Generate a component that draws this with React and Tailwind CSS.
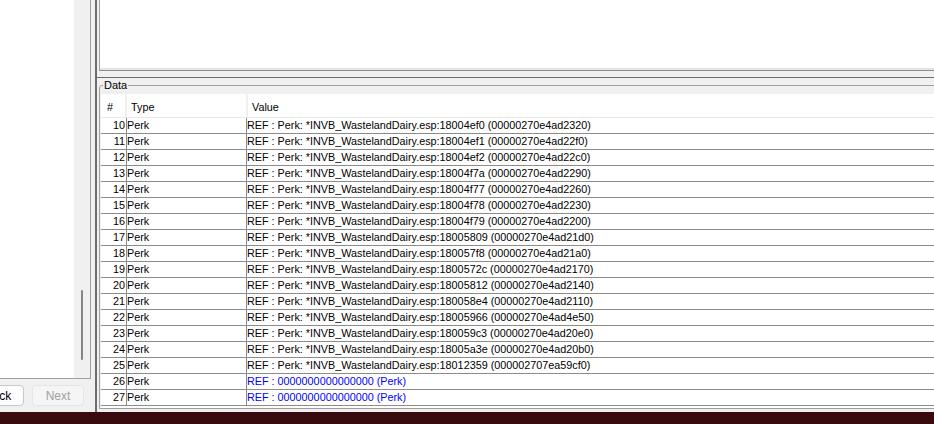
import React from 'react';

const rows = [
  [10, '18004ef0', '00000270e4ad2320'],
  [11, '18004ef1', '00000270e4ad22f0'],
  [12, '18004ef2', '00000270e4ad22c0'],
  [13, '18004f7a', '00000270e4ad2290'],
  [14, '18004f77', '00000270e4ad2260'],
  [15, '18004f78', '00000270e4ad2230'],
  [16, '18004f79', '00000270e4ad2200'],
  [17, '18005809', '00000270e4ad21d0'],
  [18, '180057f8', '00000270e4ad21a0'],
  [19, '1800572c', '00000270e4ad2170'],
  [20, '18005812', '00000270e4ad2140'],
  [21, '180058e4', '00000270e4ad2110'],
  [22, '18005966', '00000270e4ad4e50'],
  [23, '180059c3', '00000270e4ad20e0'],
  [24, '18005a3e', '00000270e4ad20b0'],
  [25, '18012359', '000002707ea59cf0'],
];

function Row({ num, value, blue }) {
  return (
    <div className="flex h-[16px] border-b border-[#8c8c8c] leading-[15px]">
      <div className="w-[26px] border-r border-[#8c8c8c] text-right pr-[1px]">{num}</div>
      <div className="w-[120px] border-r border-[#8c8c8c]">Perk</div>
      <div className={`flex-1 whitespace-nowrap ${blue ? 'text-[#0000ff]' : ''}`}>{value}</div>
    </div>
  );
}

export default function App() {
  return (
    <div className="w-[934px] h-[424px] overflow-hidden flex flex-col bg-[#f0f0f0] text-black text-[10.8px] font-['Liberation_Sans',Arial,sans-serif]">
      <div className="flex h-[412px]">
        {/* left pane */}
        <div className="w-[91px] flex flex-col">
          <div className="h-[379px] flex border-r border-b border-[#a0a0a0]">
            <div className="w-[74px] bg-white" />
            <div className="flex-1 pt-[290px]">
              <div className="ml-[7px] w-[2px] h-[70px] rounded-full bg-[#868686]" />
            </div>
          </div>
          <div className="flex gap-[8px] pt-[6px]">
            <button className="-ml-[28px] w-[52px] h-[21px] rounded-[4px] border border-[#c8c8c8] bg-[#fdfdfd] text-[12px]">Back</button>
            <button className="w-[52px] h-[21px] rounded-[4px] border border-[#e5e5e5] bg-[#f5f5f5] text-[12px] text-[#a0a0a0]">Next</button>
          </div>
        </div>

        {/* splitter gap */}
        <div className="w-[4px]" />

        {/* right pane */}
        <div className="flex-1 flex flex-col border-l-2 border-[#6d6d6d]">
          <div className="pl-[2px] h-[71px] flex flex-col">
            <div className="flex-1 flex flex-col border-l border-[#a0a0a0]">
              <div className="flex-1 bg-white" />
              <div className="h-[2px] bg-[#e4e4e4]" />
              <div className="h-[1px] bg-[#8c8c9a]" />
            </div>
          </div>
          <div className="h-[6px]" />
          <div className="flex-1 border-t border-[#6d6d6d] pl-[2px] pt-[7px]">
            <div className="relative -mr-[10px] h-[324px] border border-[#a0a0a0] rounded-tl-[3px] pl-[1px] pt-[8px]">
              <span className="absolute left-[3px] -top-[8px] px-[1px] bg-[#f0f0f0] text-[11px] leading-[14px]">Data</span>
              <div className="bg-white h-full">
                <div className="flex h-[24px] border-b border-[#e8e8e8] leading-[23px] pt-[2px]">
                  <div className="w-[24px] pl-[6px]">#</div>
                  <div className="w-[2px] -mt-[2px] bg-[#f0f0f0]" />
                  <div className="w-[119px] pl-[4px]">Type</div>
                  <div className="w-[2px] -mt-[2px] bg-[#f0f0f0]" />
                  <div className="flex-1 pl-[4px]">Value</div>
                </div>
                {rows.map(([n, id, addr]) => (
                  <Row key={n} num={n} value={`REF : Perk: *INVB_WastelandDairy.esp:${id} (${addr})`} />
                ))}
                <Row num={26} value="REF : 0000000000000000 (Perk)" blue />
                <Row num={27} value="REF : 0000000000000000 (Perk)" blue />
              </div>
            </div>
          </div>
        </div>
      </div>
      <div className="h-[12px] bg-[#3a0b0e]" />
    </div>
  );
}
